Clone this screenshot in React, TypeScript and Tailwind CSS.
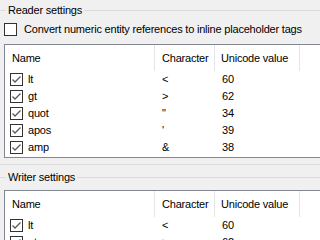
import React from "react";

type Entity = { name: string; ch: string; code: number };

const reader: Entity[] = [
  { name: "lt", ch: "<", code: 60 },
  { name: "gt", ch: ">", code: 62 },
  { name: "quot", ch: '"', code: 34 },
  { name: "apos", ch: "'", code: 39 },
  { name: "amp", ch: "&", code: 38 },
];

function Box({ checked }: { checked?: boolean }) {
  return (
    <svg width="13" height="13" viewBox="0 0 13 13" className="shrink-0">
      <rect x="0.5" y="0.5" width="12" height="12" fill="#fff" stroke="#333" />
      {checked && (
        <path d="M2.5 6.5 L5 9 L10.5 3.5" fill="none" stroke="#5a5a5a" strokeWidth="1.3" />
      )}
    </svg>
  );
}

function GroupTitle({ label }: { label: string }) {
  return (
    <div className="flex items-center h-[13px]">
      <div className="w-[6px] h-px bg-[#dcdcdc]" />
      <span className="px-[2px] leading-[13px]">{label}</span>
      <div className="flex-1 h-px bg-[#dcdcdc]" />
    </div>
  );
}

function EntityList({ rows, height }: { rows: Entity[]; height: string }) {
  return (
    <div className={`ml-[4px] border border-r-0 border-[#828790] bg-white ${height}`}>
      <div className="flex h-[26px] items-center">
        <div className="w-[150px] pl-[7px] h-full flex items-center border-r border-[#e5e5e5]">Name</div>
        <div className="w-[60px] pl-[7px] h-full flex items-center border-r border-[#e5e5e5]">Character</div>
        <div className="w-[85px] pl-[6px] h-full flex items-center border-r border-[#e5e5e5]">Unicode value</div>
      </div>
      {rows.map((r) => (
        <div key={r.name} className="flex h-[17px] items-center">
          <div className="w-[150px] pl-[5px] flex items-center gap-[5px]">
            <Box checked />
            <span>{r.name}</span>
          </div>
          <div className="w-[60px] pl-[7px]">{r.ch}</div>
          <div className="w-[85px] pl-[7px]">{r.code}</div>
        </div>
      ))}
    </div>
  );
}

export default function App() {
  return (
    <div
      className="w-[320px] h-[240px] overflow-hidden bg-[#f0f0f0] text-[11px] tracking-[-0.2px] text-black"
      style={{ fontFamily: '"Liberation Sans", Arial, sans-serif' }}
    >
      {/* Reader settings */}
      <div className="pt-[4px] h-[165px] border-b border-[#dcdcdc]">
        <GroupTitle label="Reader settings" />
        <div className="flex items-center gap-[7px] pl-[4px] mt-[6px] h-[13px]">
          <Box />
          <span>Convert numeric entity references to inline placeholder tags</span>
        </div>
        <div className="mt-[8px]">
          <EntityList rows={reader} height="h-[114px]" />
        </div>
      </div>

      {/* Writer settings */}
      <div className="pt-[6px]">
        <GroupTitle label="Writer settings" />
        <div className="mt-[6px]">
          <EntityList rows={reader.slice(0, 2)} height="h-[80px]" />
        </div>
      </div>
    </div>
  );
}
